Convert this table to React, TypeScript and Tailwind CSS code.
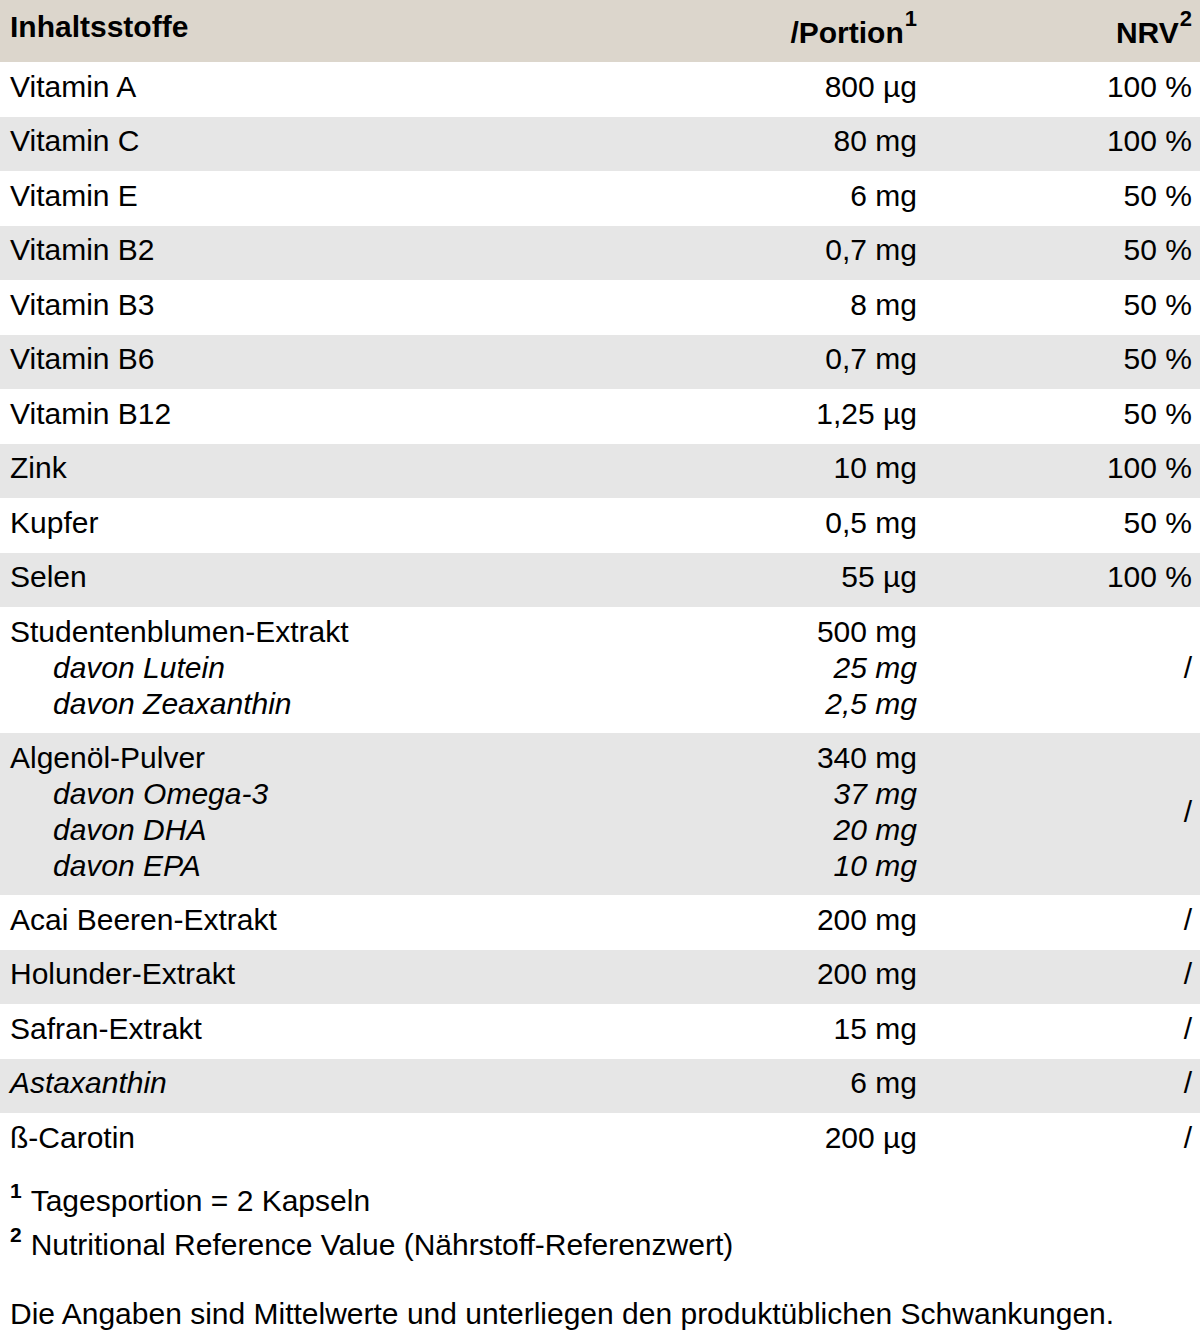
import React from 'react'

interface SubItem {
  name: string
  portion: string
}

interface Row {
  name: string
  portion: string
  nrv: string
  italic?: boolean
  subs?: SubItem[]
}

const rows: Row[] = [
  { name: 'Vitamin A', portion: '800 µg', nrv: '100 %' },
  { name: 'Vitamin C', portion: '80 mg', nrv: '100 %' },
  { name: 'Vitamin E', portion: '6 mg', nrv: '50 %' },
  { name: 'Vitamin B2', portion: '0,7 mg', nrv: '50 %' },
  { name: 'Vitamin B3', portion: '8 mg', nrv: '50 %' },
  { name: 'Vitamin B6', portion: '0,7 mg', nrv: '50 %' },
  { name: 'Vitamin B12', portion: '1,25 µg', nrv: '50 %' },
  { name: 'Zink', portion: '10 mg', nrv: '100 %' },
  { name: 'Kupfer', portion: '0,5 mg', nrv: '50 %' },
  { name: 'Selen', portion: '55 µg', nrv: '100 %' },
  {
    name: 'Studentenblumen-Extrakt',
    portion: '500 mg',
    nrv: '/',
    subs: [
      { name: 'davon Lutein', portion: '25 mg' },
      { name: 'davon Zeaxanthin', portion: '2,5 mg' },
    ],
  },
  {
    name: 'Algenöl-Pulver',
    portion: '340 mg',
    nrv: '/',
    subs: [
      { name: 'davon Omega-3', portion: '37 mg' },
      { name: 'davon DHA', portion: '20 mg' },
      { name: 'davon EPA', portion: '10 mg' },
    ],
  },
  { name: 'Acai Beeren-Extrakt', portion: '200 mg', nrv: '/' },
  { name: 'Holunder-Extrakt', portion: '200 mg', nrv: '/' },
  { name: 'Safran-Extrakt', portion: '15 mg', nrv: '/' },
  { name: 'Astaxanthin', portion: '6 mg', nrv: '/', italic: true },
  { name: 'ß-Carotin', portion: '200 µg', nrv: '/' },
]

function Sup({ children }: { children: React.ReactNode }) {
  return <span className="relative -top-[17px] ml-[1px] text-[22px] font-bold leading-none">{children}</span>
}

function Note({ n, children }: { n: string; children: React.ReactNode }) {
  return (
    <div>
      <span className="relative -top-[13px] mr-[9px] text-[21px] font-bold leading-none">{n}</span>
      {children}
    </div>
  )
}

export default function App() {
  return (
    <div className="w-[1200px] bg-white text-[30px] leading-[36px] text-black" style={{ fontFamily: '"Liberation Sans", Arial, sans-serif' }}>
      {/* Header */}
      <div className="grid h-[62px] grid-cols-[737px_188px_275px] bg-[#dcd6cc] font-bold">
        <div className="pl-[10px] pt-[9px]">Inhaltsstoffe</div>
        <div className="pr-[8px] pt-[15px] text-right">
          /Portion<Sup>1</Sup>
        </div>
        <div className="pr-[8px] pt-[15px] text-right">
          NRV<Sup>2</Sup>
        </div>
      </div>

      {/* Rows */}
      {rows.map((row, i) => (
        <div
          key={row.name}
          className={`grid grid-cols-[737px_188px_275px] pt-[6.5px] ${row.subs ? 'pb-[11.5px]' : 'pb-[12px]'} ${i % 2 === 1 ? 'bg-[#e6e6e6]' : 'bg-white'}`}
        >
          <div className="pl-[10px]">
            <div className={row.italic ? 'italic' : ''}>{row.name}</div>
            {row.subs?.map((s) => (
              <div key={s.name} className="pl-[43px] italic">
                {s.name}
              </div>
            ))}
          </div>
          <div className="pr-[8px] text-right">
            <div>{row.portion}</div>
            {row.subs?.map((s) => (
              <div key={s.name} className="italic">
                {s.portion}
              </div>
            ))}
          </div>
          <div className="flex items-center justify-end pr-[8px]">{row.nrv}</div>
        </div>
      ))}

      {/* Footnotes */}
      <div className="mt-[11px] pl-[10px] leading-[44px]">
        <Note n="1">Tagesportion = 2 Kapseln</Note>
        <Note n="2">Nutritional Reference Value (Nährstoff-Referenzwert)</Note>
        <div className="mt-[25px]">Die Angaben sind Mittelwerte und unterliegen den produktüblichen Schwankungen.</div>
      </div>
    </div>
  )
}
